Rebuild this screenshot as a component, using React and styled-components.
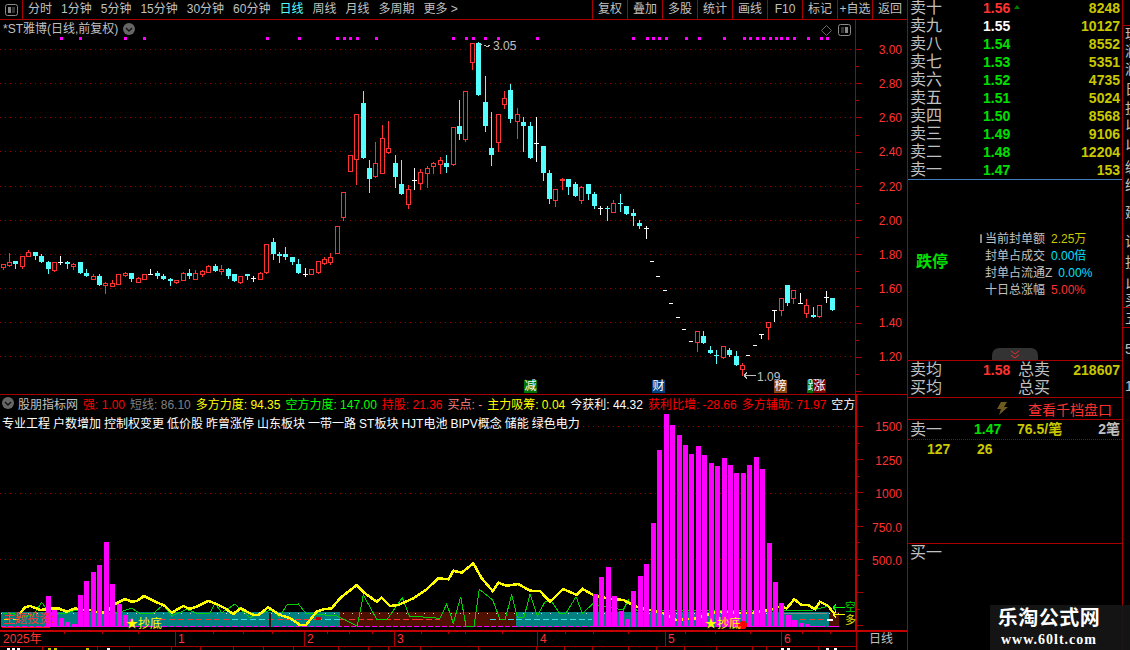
import React from "react"
import styled, { createGlobalStyle } from "styled-components"

const LINE = "#a80000"
const BRIGHT = "#c40000"
const RED = "#ff3232"
const GRAY = "#c0c0c0"
const YELLOW = "#c8c800"
const GREEN = "#00e000"
const CYAN = "#54ffff"

const GlobalStyle = createGlobalStyle`
    html, body {
        margin: 0;
        padding: 0;
        background: #000;
    }
    body {
        font-family: "Liberation Sans", "Noto Sans CJK SC", sans-serif;
        font-size: 12px;
        color: ${GRAY};
    }
`

const Screen = styled.div`
    position: relative;
    width: 1130px;
    height: 650px;
    display: flex;
    background: #000;
    overflow: hidden;
`

const LeftColumn = styled.div`
    width: 907px;
    height: 650px;
    display: flex;
    flex-direction: column;
    flex-shrink: 0;
`

const Toolbar = styled.div`
    height: 19px;
    display: flex;
    align-items: center;
    border-bottom: 1px solid ${LINE};
    flex-shrink: 0;
`

const PanelButton = styled.div`
    width: 23px;
    height: 19px;
    display: flex;
    align-items: center;
    justify-content: center;
    border-right: 1px solid ${LINE};
    box-sizing: border-box;
`

const TabList = styled.div`
    display: flex;
    gap: 9px;
    padding-left: 5px;
    line-height: 19px;
`

const Tab = styled.span`
    color: ${({ $active }) => ($active ? CYAN : GRAY)};
    white-space: nowrap;
`

const ToolGroup = styled.div`
    margin-left: auto;
    display: flex;
    height: 19px;
`

const ToolButton = styled.div`
    width: 35px;
    box-sizing: border-box;
    border-left: 1px solid ${LINE};
    text-align: center;
    line-height: 19px;
    white-space: nowrap;
`

const MainPane = styled.div`
    position: relative;
    height: 374px;
    flex-shrink: 0;
`

const SubPane = styled.div`
    position: relative;
    height: 236px;
    box-sizing: border-box;
    flex-shrink: 0;
    border-top: 1px solid ${LINE};
`

const AxisPane = styled.div`
    height: 20px;
    flex-shrink: 0;
`

const Chart = styled.svg`
    display: block;
    width: 907px;
    height: 100%;
    shape-rendering: crispEdges;
    font-family: "Liberation Sans", "Noto Sans CJK SC", sans-serif;
    font-size: 12px;
`

const ChartTitle = styled.div`
    position: absolute;
    left: 3px;
    top: 1px;
    display: flex;
    align-items: center;
    gap: 5px;
    line-height: 16px;
    white-space: nowrap;
`

const ChartCorner = styled.div`
    position: absolute;
    left: 821px;
    top: 4px;
    display: flex;
    align-items: center;
    gap: 6px;
`

const Badge = styled.span`
    position: absolute;
    left: ${({ $x }) => $x}px;
    top: 360px;
    width: 13px;
    height: 13px;
    line-height: 13px;
    text-align: center;
    color: #fff;
    background: ${({ $bg }) => $bg};
`

const SubHeader = styled.div`
    position: absolute;
    left: 2px;
    top: -1px;
    width: 854px;
    overflow: hidden;
    display: flex;
    flex-direction: column;
`

const IndicatorRow = styled.div`
    display: flex;
    align-items: center;
    height: 18px;
    white-space: nowrap;
    svg {
        flex-shrink: 0;
    }
`

const IndicatorName = styled.span`
    margin: 0 5px 0 4px;
    color: ${GRAY};
    flex-shrink: 0;
`

const Indicator = styled.span`
    color: ${({ $color }) => $color};
    margin-right: 5px;
    flex-shrink: 0;
`

const ConceptRow = styled.div`
    display: flex;
    gap: 3px;
    height: 18px;
    margin-top: 3px;
    line-height: 18px;
    color: #fff;
    white-space: nowrap;
`

const SideLabel = styled.span`
    position: absolute;
    top: ${({ $y }) => $y}px;
    left: ${({ $x }) => $x}px;
    color: ${({ $color }) => $color};
    font-size: ${({ $size }) => $size ?? 12}px;
    line-height: 14px;
    white-space: nowrap;
`

const RightPanel = styled.div`
    position: relative;
    width: 216px;
    height: 650px;
    box-sizing: border-box;
    flex-shrink: 0;
    border-left: 1px solid ${LINE};
    border-right: 1px solid ${LINE};
    display: flex;
    flex-direction: column;
`

const AskList = styled.div`
    height: 179px;
    flex-shrink: 0;
`

const PanelLabel = styled.span`
    font-size: 16px;
    color: ${GRAY};
    white-space: nowrap;
`

const Num = styled.span`
    font-size: 14px;
    font-weight: 700;
    color: ${({ $color }) => $color ?? YELLOW};
    text-align: ${({ $right }) => ($right ? "right" : "left")};
    white-space: nowrap;
`

const AskRow = styled.div`
    position: relative;
    display: grid;
    grid-template-columns: 73px 40px 1fr;
    height: 18px;
    line-height: 16px;
    padding: 0 2px;
`

const UpMark = styled.i`
    position: absolute;
    left: 106px;
    top: 5px;
    width: 0;
    height: 0;
    border-left: 3px solid transparent;
    border-right: 3px solid transparent;
    border-bottom: 4px solid #008000;
`

const LimitSection = styled.div`
    position: relative;
    height: 181px;
    box-sizing: border-box;
    flex-shrink: 0;
    border-top: 1px solid #4080c0;
    padding: 51px 0 0 8px;
    display: flex;
`

const LimitState = styled.div`
    margin-top: 22px;
    width: 64px;
    font-size: 16px;
    line-height: 18px;
    font-weight: 700;
    color: ${GREEN};
`

const LimitInfo = styled.div`
    position: relative;
    margin-left: 1px;
    padding-left: 4px;
`

const InfoRow = styled.div`
    display: flex;
    gap: 6px;
    height: 17px;
    line-height: 17px;
    white-space: nowrap;
`

const InfoValue = styled.span`
    color: ${({ $color }) => $color};
`

const InfoMark = styled.i`
    position: absolute;
    left: -1px;
    top: 3px;
    width: 2px;
    height: 9px;
    background: #888;
    border-radius: 2px 2px 0 0;
`

const CollapseTab = styled.div`
    position: absolute;
    left: 84px;
    bottom: 0;
    width: 46px;
    height: 12px;
    background: #333;
    border-radius: 7px 7px 0 0;
    display: flex;
    align-items: center;
    justify-content: center;
`

const AvgSection = styled.div`
    height: 36px;
    flex-shrink: 0;
    border-top: 1px solid ${LINE};
`

const AvgRow = styled.div`
    display: grid;
    grid-template-columns: 73px 35px 1fr auto;
    height: 18px;
    line-height: 18px;
    padding: 0 2px;
`

const LinkRow = styled.div`
    height: 21px;
    flex-shrink: 0;
    border-top: 1px solid ${LINE};
    display: flex;
    align-items: center;
    gap: 20px;
    padding-left: 89px;
    color: ${RED};
    font-size: 14px;
`

const TickRow = styled.div`
    height: 19px;
    flex-shrink: 0;
    border-top: 1px solid ${LINE};
    border-bottom: 1px dotted ${LINE};
    display: grid;
    grid-template-columns: 64px 43px 1fr auto;
    line-height: 19px;
    padding: 0 2px;
`

const QtyRow = styled.div`
    height: 18px;
    display: grid;
    grid-template-columns: 50px auto;
    justify-content: start;
    line-height: 18px;
    padding-left: 19px;
    flex-shrink: 0;
`

const BidSection = styled.div`
    margin-top: auto;
    height: 107px;
    box-sizing: border-box;
    flex-shrink: 0;
    border-top: 1px solid ${LINE};
    padding-left: 2px;
    line-height: 18px;
`

const SideStrip = styled.div`
    width: 7px;
    height: 650px;
    overflow: hidden;
    flex-shrink: 0;
`

const StripCell = styled.div`
    height: ${({ $h }) => $h}px;
    line-height: ${({ $h }) => $h}px;
    padding-left: 2px;
    font-size: 14px;
    white-space: nowrap;
    color: ${GRAY};
    box-sizing: border-box;
    border-top: ${({ $line }) => ($line ? `1px solid ${LINE}` : "none")};
`

const Watermark = styled.div`
    position: absolute;
    right: 0;
    bottom: 0;
    width: 140px;
    height: 45px;
    box-sizing: border-box;
    padding-right: 22px;
    background: rgba(22, 22, 22, 0.92);
    display: flex;
    flex-direction: column;
    align-items: center;
    justify-content: center;
    color: #fff;
    font-weight: 700;
    white-space: nowrap;
`

const WatermarkTitle = styled.div`
    font-size: 20px;
    line-height: 25px;
    letter-spacing: 0.5px;
`

const WatermarkUrl = styled.div`
    font-family: "Liberation Serif", serif;
    font-size: 14px;
    line-height: 18px;
    letter-spacing: 1px;
`

// 画K线的数据: 类型, 实体上, 实体下, 影线上, 影线下 (放大3倍的像素, base是y起点)
const candleGroups = [
    { base: 230, rows: [
        ["r",102,110,102,117],["r",97,104,69,107],["c",94,101,94,113],["r",79,109,79,113],["r",67,79,60,79],
        ["c",67,77,67,86],["c",78,95,72,95],["c",96,117,93,129],["r",97,119,97,122],["w",95,95,78,102],
        ["c",97,102,93,113],["r",103,109,100,117],["c",96,129,96,129],["c",129,137,117,137],["r",139,146,133,146],
        ["c",138,165,132,165],["r",159,166,155,188],["r",160,167,150,167],["r",133,161,133,161],["r",129,134,126,137],
        ["c",129,147,129,153],["r",145,155,141,155],["r",133,146,133,146],["w",131,131,117,132],["c",129,137,123,143],
        ["c",138,147,132,147],["c",148,152,144,165],["r",149,155,149,159],["r",129,149,126,150],["c",129,137,117,143],
        ["r",129,147,120,147],["r",124,131,120,137],["r",109,125,105,125],["c",108,122,102,122],["r",118,124,106,132],
        ["c",117,137,113,144],["c",132,153,132,153],["r",138,155,138,159],["c",132,137,132,147],["w",145,145,138,152],
        ["r",129,147,126,147],["r",42,125,42,129],["c",36,72,24,87],["c",72,78,66,96],["c",72,81,51,87],
        ["c",81,95,81,102],["c",102,129,87,129],["w",133,133,114,138],["r",118,132,118,132],["r",93,125,93,129],
        ["r",87,99,82,102],["r",81,95,69,102],["r",-12,68,-12,68],
    ]},
    { base: 30, rows: [
        ["r",487,560,487,569],["r",376,422,376,422],["r",253,386,253,462],["c",220,384,183,384],["c",415,446,390,486],
        ["r",400,437,336,440],["r",325,428,285,428],["r",355,365,273,368],["c",400,441,375,471],["c",462,492,390,492],
        ["r",478,521,465,534],["w",451,451,414,477],["r",427,458,417,477],["r",415,428,408,471],["r",400,407,396,430],
        ["r",391,401,381,430],["c",400,411,375,426],["r",292,401,292,405],["c",289,312,210,327],["r",184,327,184,333],
        ["r",40,95,40,117],["c",40,195,36,195],["c",217,288,138,303],["c",355,375,247,405],["r",253,335,253,363],
        ["r",205,221,183,234],["c",181,267,163,276],["r",253,272,235,324],["c",277,288,262,363],["c",289,384,277,384],
        ["w",340,340,262,393],["c",349,429,349,450],["c",430,507,420,519],["r",478,510,478,528],["f",448,452,445,477],
        ["c",447,471,447,492],["c",462,498,456,498],["r",471,510,468,519],["c",462,492,462,507],["c",492,528,486,534],
        ["w",535,535,528,552],["k",535,535,528,570],["r",520,545,510,545],["k",520,520,492,543],["c",528,552,528,552],
        ["c",549,558,537,585],["c",579,588,570,594],["w",593,593,588,624],
    ]},
    { base: 220, rows: [
        ["d",124],["d",169],["d",211],["d",250],["d",292],["d",328],["d",364],
        ["r",334,365,334,393],["c",348,369,333,369],["c",390,399,378,399],["k",405,405,390,429],["r",379,410,379,413],
        ["c",390,405,384,408],["c",408,435,393,435],["r",435,447,429,465],
        ["d",406],["d",376],["w",343,343,343,354],
        ["r",307,320,307,357],["w",271,271,271,303],["r",235,269,235,285],["c",195,249,195,255],["r",211,233,211,249],
        ["w",250,250,220,250],["r",256,278,238,291],["c",285,291,262,291],["r",256,287,256,291],["w",232,232,213,246],
        ["c",235,270,235,270],
    ]},
]

const candles = candleGroups.flatMap(({ base, rows }) =>
    rows.map(([kind, ...vals]) => [kind, ...vals.map((v) => Math.round(base + v / 3))])
)

const dotXs = [60,79,124,143,266,298,336,343,349,356,375,452,465,472,484,497,536,632,646,652,658,665,685,698,723,743,749,756,762,769,775,780,786,793,807,820,826]
const priceGrid = [[49,"3.00"],[83,"2.80"],[117,"2.60"],[151,"2.40"],[186,"2.20"],[220,"2.00"],[254,"1.80"],[288,"1.60"],[322,"1.40"],[356,"1.20"]]

const Candle = ({ index, data }) => {
    const x = Math.floor(3 + 6.43 * index)
    const [kind, top, bottom, wickTop, wickBottom] = data
    if (kind === "d") return <rect x={x - 2} y={top} width={4} height={1} fill="#fff" />
    const color = { r: RED, f: RED, c: CYAN, w: "#fff", k: CYAN }[kind]
    return (
        <g>
            <rect x={x} y={wickTop} width={1} height={wickBottom - wickTop + 1} fill={color} />
            {kind === "r" && (
                <rect x={x - 1.5} y={top + 0.5} width={4} height={Math.max(bottom - top, 1)} fill="#000" stroke={color} />
            )}
            {(kind === "c" || kind === "f") && (
                <rect x={x - 2} y={top} width={5} height={Math.max(bottom - top, 1)} fill={color} />
            )}
            {(kind === "w" || kind === "k") && <rect x={x - 2} y={top} width={5} height={1} fill={color} />}
        </g>
    )
}

const PriceChart = () => (
    <Chart viewBox="0 20 907 374">
        {priceGrid.map(([y]) => (
            <line key={y} x1={0} x2={855} y1={y + 0.5} y2={y + 0.5} stroke="#900000" strokeDasharray="1 4" />
        ))}
        {dotXs.map((x) => <rect key={x} x={x} y={37} width={3} height={3} fill="#ff00ff" />)}
        {candles.map((c, i) => <Candle key={i} index={i} data={c} />)}
        <path d="M479 44h3M479 44v3M484 45l3 1.5 3-1" stroke={GRAY} fill="none" />
        <text x={493} y={50} fill={GRAY} fontSize="12">3.05</text>
        <path d="M744 375.5h12M744 375.5l3-3M744 375.5l3 3" stroke={GRAY} fill="none" />
        <text x={757} y={381} fill={GRAY} fontSize="12">1.09</text>
        <rect x={855} y={20} width={1} height={374} fill={LINE} />
        {Array.from({ length: 21 }, (_, i) => 49 + i * 17.1).map((y, i) => (
            <rect key={y} x={856} y={Math.round(y)} width={i % 2 ? 3 : 6} height={1} fill={LINE} />
        ))}
        {priceGrid.map(([y, label]) => (
            <text key={label} x={902} y={y + 5} textAnchor="end" fill={RED}>{label}</text>
        ))}
    </Chart>
)

const toPoints = (rows, x0) => rows.map(([x, y]) => `${(x0 + x / 3).toFixed(1)},${(530 + y / 3).toFixed(1)}`).join(" ")

const yellowLine = [
    toPoints([[60,250],[75,232],[90,228],[105,233],[120,240],[150,236],[175,235],[200,245],[225,235],[245,240],[270,240],[300,250],[320,245],[345,222],[375,207],[395,215],[410,213],[432,198],[460,212],[495,228],[515,248],[550,228],[570,237],[595,228],[625,213],[650,222],[675,235],[700,252],[722,235],[760,255],[775,255],[805,232],[840,255],[870,265],[900,285],[918,285],[950,245],[970,238],[995,235],[1020,205],[1070,165],[1095,190],[1130,215],[1145,203],[1170,228],[1195,225],[1240,205],[1280,178],[1315,145],[1345,148]], 0),
    toPoints([[0,140],[10,122],[35,128],[70,100],[95,145],[128,183],[145,158],[170,167],[205,162],[240,182],[270,183],[300,215],[340,177],[380,195],[398,177],[430,195],[470,205],[520,210],[560,230],[600,240],[640,250],[680,270],[740,265],[800,245],[900,250],[960,240],[990,230],[1010,235],[1033,208],[1055,225],[1075,225],[1095,238],[1110,215],[1135,228],[1150,248]], 450),
].join(" ")

const greenLine = [
    toPoints([[10,250],[40,250],[60,262],[100,255],[125,217],[150,250],[190,252],[230,240],[260,240],[310,250],[345,250],[395,235],[420,250],[460,250],[490,225],[515,258],[560,238],[590,250],[630,250],[645,220],[665,248],[705,222],[750,263],[780,250],[815,240],[838,262],[860,225],[895,222],[918,250],[1010,258],[1072,288],[1090,195],[1130,268],[1160,270],[1207,203],[1228,258],[1320,265],[1340,222]], 0),
    toPoints([[0,250],[10,280],[32,200],[48,288],[72,288],[88,178],[128,210],[150,268],[165,270],[185,193],[202,262],[222,262],[240,192],[262,258],[285,215],[305,215],[330,252],[348,250],[378,200],[397,250],[428,222],[520,240],[535,210],[560,240],[600,240],[780,240],[985,240],[1030,242],[1080,242],[1130,230]], 450),
].join(" ")

const volumeBars = [
    [46,596],[52,610],[59,618],[65,622],[72,624],[78,595],[84,581],[91,572],[97,565],[104,542],[110,584],[117,604],[123,615],[129,619],
    [593,594],[599,577],[606,567],[612,596],[619,611],[625,619],[631,591],[638,576],[644,564],[651,523],[657,450],[664,414],[670,425],
    [677,435],[683,445],[689,454],[696,446],[702,455],[709,463],[715,466],[722,458],[728,465],[734,473],[741,473],[747,465],[754,457],
    [760,469],[767,543],[773,582],[779,603],[786,615],[792,620],[799,623],[805,624],[812,626],[818,626],[830,626],
]

const dashes = [
    [4,20,"#ffe000"],[160,232,RED],[232,268,"#40e0e0"],[268,316,RED],[316,340,"#40e0e0"],[340,417,RED],[417,440,RED],[490,516,"#40e0e0"],[516,592,"#40e0e0"],[800,826,RED],
]

const volumeLabels = [[426,"1500"],[460,"1250"],[493,"1000"],[527,"750.0"],[560,"500.0"]]

const IndicatorChart = () => (
    <Chart viewBox="0 395 907 235">
        {[[426, 578], [493, 0], [559, 0]].map(([y, from]) => (
            <line key={y} x1={from} x2={855} y1={y + 0.5} y2={y + 0.5} stroke="#900000" strokeDasharray="1 4" />
        ))}
        <rect x={1} y={612} width={339} height={15} fill="#008080" />
        <rect x={340} y={612} width={176} height={15} fill="#501000" />
        <rect x={516} y={612} width={313} height={15} fill="#008080" />
        <rect x={829} y={612} width={10} height={15} fill="#501000" />
        <line x1={1} x2={839} y1={613.5} y2={613.5} stroke="#d0d0d0" strokeDasharray="1 8" />
        <line x1={1} x2={839} y1={626.5} y2={626.5} stroke="#ff00ff" strokeDasharray="5 2" />
        {dashes.map(([a, b, color]) => (
            <line key={a} x1={a} x2={b} y1={619.5} y2={619.5} stroke={color} strokeDasharray="6 3" />
        ))}
        <rect x={269} y={613} width={2} height={14} fill="#301010" />
        <rect x={316} y={617} width={5} height={3} fill="#c00000" />
        <line x1={783} x2={827} y1={613.5} y2={613.5} stroke="#888" />
        <rect x={827} y={619} width={6} height={2} fill="#fff" />
        <polyline points={greenLine} fill="none" stroke="#00d000" />
        <polyline points={yellowLine} fill="none" stroke="#ffff00" strokeWidth="2.5" />
        {volumeBars.map(([x, y]) => <rect key={x} x={x} y={y} width={5} height={627 - y} fill="#ff00ff" />)}
        <rect x={2} y={627} width={48} height={1} fill="#ff0000" />
        <circle cx={743} cy={625} r={4} fill="#ff0000" />
        <circle cx={740} cy={626} r={3} fill="#ff0000" />
        <path d="M833 607.5h12M833 607.5l3-3M833 607.5l3 3" stroke="#00ff00" fill="none" />
        <path d="M833 614.5h12M833 614.5l3-3M833 614.5l3 3" stroke="#ffff00" fill="none" />
        <rect x={855} y={395} width={2} height={235} fill={BRIGHT} />
        {Array.from({ length: 13 }, (_, i) => 426 + i * 16.6).map((y, i) => (
            <rect key={y} x={857} y={Math.round(y)} width={i % 2 ? 3 : 6} height={1} fill={LINE} />
        ))}
        {volumeLabels.map(([y, label]) => (
            <text key={label} x={902} y={y + 5} textAnchor="end" fill={RED}>{label}</text>
        ))}
    </Chart>
)

const monthTicks = [[175,"1"],[304,"2"],[394,"3"],[537,"4"],[665,"5"],[781,"6"]]
const minorTicks = [64,102,138,213,243,272,327,349,372,421,448,465,502,565,593,628,685,715,750,802,830]
const lowerTicks = [42,97,129,171,200,233,263,293,338,368,388,420,478,536,564,592,628,656,684,716,752,766,818,856]
const hiddenText = [[7,"#fff"],[12,"#fff"],[17,"#fff"],[48,YELLOW],[54,YELLOW],[86,YELLOW],[107,"#fff"],[781,"#fff"],[787,"#fff"],[826,"#fff"],[834,"#fff"]]

const TimeAxis = () => (
    <Chart viewBox="0 630 907 20">
        <rect x={0} y={630} width={907} height={2} fill={BRIGHT} />
        <rect x={0} y={646} width={856} height={1} fill={LINE} />
        <rect x={856} y={632} width={1} height={18} fill={LINE} />
        {monthTicks.map(([x, label]) => (
            <g key={label}>
                <rect x={x} y={632} width={1} height={14} fill={LINE} />
                <text x={x + 3} y={643} fill={RED}>{label}</text>
            </g>
        ))}
        {minorTicks.map((x) => <rect key={x} x={x} y={632} width={1} height={2} fill={LINE} />)}
        {lowerTicks.map((x) => <rect key={x} x={x} y={647} width={1} height={3} fill={LINE} />)}
        {hiddenText.map(([x, color]) => <rect key={x} x={x} y={648} width={3} height={2} fill={color} />)}
        <text x={3} y={643} fill={RED}>2025年</text>
        <text x={869} y={643} fill={GRAY}>日线</text>
    </Chart>
)

const PanelIcon = ({ side }) => (
    <svg width="13" height="12" viewBox="0 0 13 12">
        <rect x="0.5" y="0.5" width="12" height="11" rx="2" fill="none" stroke="#8a8a8a" />
        <rect x={side === "left" ? 3 : 7} y="3" width="3" height="6" fill="#8a8a8a" />
        <rect x={side === "left" ? 7 : 3} y="3" width="3" height="6" fill="#333" />
    </svg>
)

const RoundChevron = () => (
    <svg width="12" height="12" viewBox="0 0 12 12">
        <circle cx="6" cy="6" r="6" fill="#666" />
        <path d="M3 5l3 3 3-3" fill="none" stroke="#111" strokeWidth="1.4" />
    </svg>
)

const Diamond = () => (
    <svg width="11" height="11" viewBox="0 0 11 11">
        <path d="M5.5 0.5l5 5-5 5-5-5z" fill="none" stroke="#666" />
    </svg>
)

const DoubleChevron = () => (
    <svg width="12" height="9" viewBox="0 0 12 9">
        <path d="M2 1l4 3 4-3M2 5l4 3 4-3" fill="none" stroke="#e03030" />
    </svg>
)

const Bolt = () => (
    <svg width="11" height="13" viewBox="0 0 11 13">
        <path d="M4 0h6L7 5h4L2 13l2-6H0z" fill="#6e5a20" />
    </svg>
)

const tabs = ["分时", "1分钟", "5分钟", "15分钟", "30分钟", "60分钟", "日线", "周线", "月线", "多周期", "更多 >"]
const tools = ["复权", "叠加", "多股", "统计", "画线", "F10", "标记", "+自选", "返回"]
const asks = [
    ["卖十", "1.56", RED, "8248"], ["卖九", "1.55", "#fff", "10127"], ["卖八", "1.54", GREEN, "8552"], ["卖七", "1.53", GREEN, "5351"],
    ["卖六", "1.52", GREEN, "4735"], ["卖五", "1.51", GREEN, "5024"], ["卖四", "1.50", GREEN, "8568"], ["卖三", "1.49", GREEN, "9106"],
    ["卖二", "1.48", GREEN, "12204"], ["卖一", "1.47", GREEN, "153"],
]
const indicators = [
    ["强: 1.00", "#ff0000"], ["短线: 86.10", "#808080"], ["多方力度: 94.35", "#ffff00"], ["空方力度: 147.00", "#00ff00"],
    ["持股: 21.36", "#ff0000"], ["买点: -", "#ff8080"], ["主力吸筹: 0.04", "#ffff00"], ["今获利: 44.32", "#fff"],
    ["获利比增: -28.66", "#ff0000"], ["多方辅助: 71.97", "#ff0000"], ["空方", "#fff"],
]
const concepts = ["专业工程", "户数增加", "控制权变更", "低价股", "昨曾涨停", "山东板块", "一带一路", "ST板块", "HJT电池", "BIPV概念", "储能", "绿色电力"]
const limitInfo = [
    ["当前封单额", "2.25万", YELLOW], ["封单占成交", "0.00倍", "#00e0ff"], ["封单占流通Z", "0.00%", "#00e0ff"], ["十日总涨幅", "5.00%", RED],
]
const strip = [
    [25, ""], [17, "理", 1], [18, "润"], [18, "润"], [22, "日"], [17, "投"], [16, "以"], [24, "以"], [20, "缓"], [16, "绿"],
    [39, "建"], [18, "设"], [25, "投"], [18, "以"], [14, "买"], [20, "五", 1], [42, "5", 1], [9, ""], [17, "1"],
]

const App = () => (
    <Screen>
        <GlobalStyle />
        <LeftColumn>
            <Toolbar>
                <PanelButton><PanelIcon side="left" /></PanelButton>
                <TabList>
                    {tabs.map((t) => <Tab key={t} $active={t === "日线"}>{t}</Tab>)}
                </TabList>
                <ToolGroup>
                    {tools.map((t) => <ToolButton key={t}>{t}</ToolButton>)}
                </ToolGroup>
            </Toolbar>
            <MainPane>
                <PriceChart />
                <ChartTitle>*ST雅博(日线,前复权)<RoundChevron /></ChartTitle>
                <ChartCorner><Diamond /><PanelIcon side="right" /></ChartCorner>
                <Badge $x={524} $bg="#007000">减</Badge>
                <Badge $x={652} $bg="#004080">财</Badge>
                <Badge $x={774} $bg="#8b4513">榜</Badge>
                <Badge $x={807} $bg="#007000">跌</Badge>
                <Badge $x={813} $bg="#800000">涨</Badge>
            </MainPane>
            <SubPane>
                <IndicatorChart />
                <SubHeader>
                    <IndicatorRow>
                        <RoundChevron />
                        <IndicatorName>股朋指标网</IndicatorName>
                        {indicators.map(([text, color]) => <Indicator key={text} $color={color}>{text}</Indicator>)}
                    </IndicatorRow>
                    <ConceptRow>
                        {concepts.map((c) => <span key={c}>{c}</span>)}
                    </ConceptRow>
                </SubHeader>
                <SideLabel $x={3} $y={217} $color={RED}>主题投资:</SideLabel>
                <SideLabel $x={126} $y={222} $color="#ffff00">★抄底</SideLabel>
                <SideLabel $x={705} $y={222} $color="#ffff00">★抄底</SideLabel>
                <SideLabel $x={845} $y={205} $color="#00d000" $size={11}>空</SideLabel>
                <SideLabel $x={845} $y={218} $color="#e0e000" $size={11}>多</SideLabel>
            </SubPane>
            <AxisPane><TimeAxis /></AxisPane>
        </LeftColumn>
        <RightPanel>
            <AskList>
                {asks.map(([label, price, color, vol]) => (
                    <AskRow key={label}>
                        <PanelLabel>{label}</PanelLabel>
                        <Num $color={color}>{price}</Num>
                        <Num $right>{vol}</Num>
                        {label === "卖十" && <UpMark />}
                    </AskRow>
                ))}
            </AskList>
            <LimitSection>
                <LimitState>跌停</LimitState>
                <LimitInfo>
                    <InfoMark />
                    {limitInfo.map(([label, value, color]) => (
                        <InfoRow key={label}>
                            <span>{label}</span>
                            <InfoValue $color={color}>{value}</InfoValue>
                        </InfoRow>
                    ))}
                </LimitInfo>
                <CollapseTab><DoubleChevron /></CollapseTab>
            </LimitSection>
            <AvgSection>
                <AvgRow>
                    <PanelLabel>卖均</PanelLabel>
                    <Num $color={RED}>1.58</Num>
                    <PanelLabel>总卖</PanelLabel>
                    <Num>218607</Num>
                </AvgRow>
                <AvgRow>
                    <PanelLabel>买均</PanelLabel>
                    <span />
                    <PanelLabel>总买</PanelLabel>
                </AvgRow>
            </AvgSection>
            <LinkRow><Bolt />查看千档盘口</LinkRow>
            <TickRow>
                <PanelLabel>卖一</PanelLabel>
                <Num $color={GREEN}>1.47</Num>
                <Num>76.5/笔</Num>
                <Num $color={GRAY}>2笔</Num>
            </TickRow>
            <QtyRow>
                <Num>127</Num>
                <Num>26</Num>
            </QtyRow>
            <BidSection><PanelLabel>买一</PanelLabel></BidSection>
        </RightPanel>
        <SideStrip>
            {strip.map(([h, text, line], i) => <StripCell key={i} $h={h} $line={line}>{text}</StripCell>)}
        </SideStrip>
        <Watermark>
            <WatermarkTitle>乐淘公式网</WatermarkTitle>
            <WatermarkUrl>www.60lt.com</WatermarkUrl>
        </Watermark>
    </Screen>
)

export default App
